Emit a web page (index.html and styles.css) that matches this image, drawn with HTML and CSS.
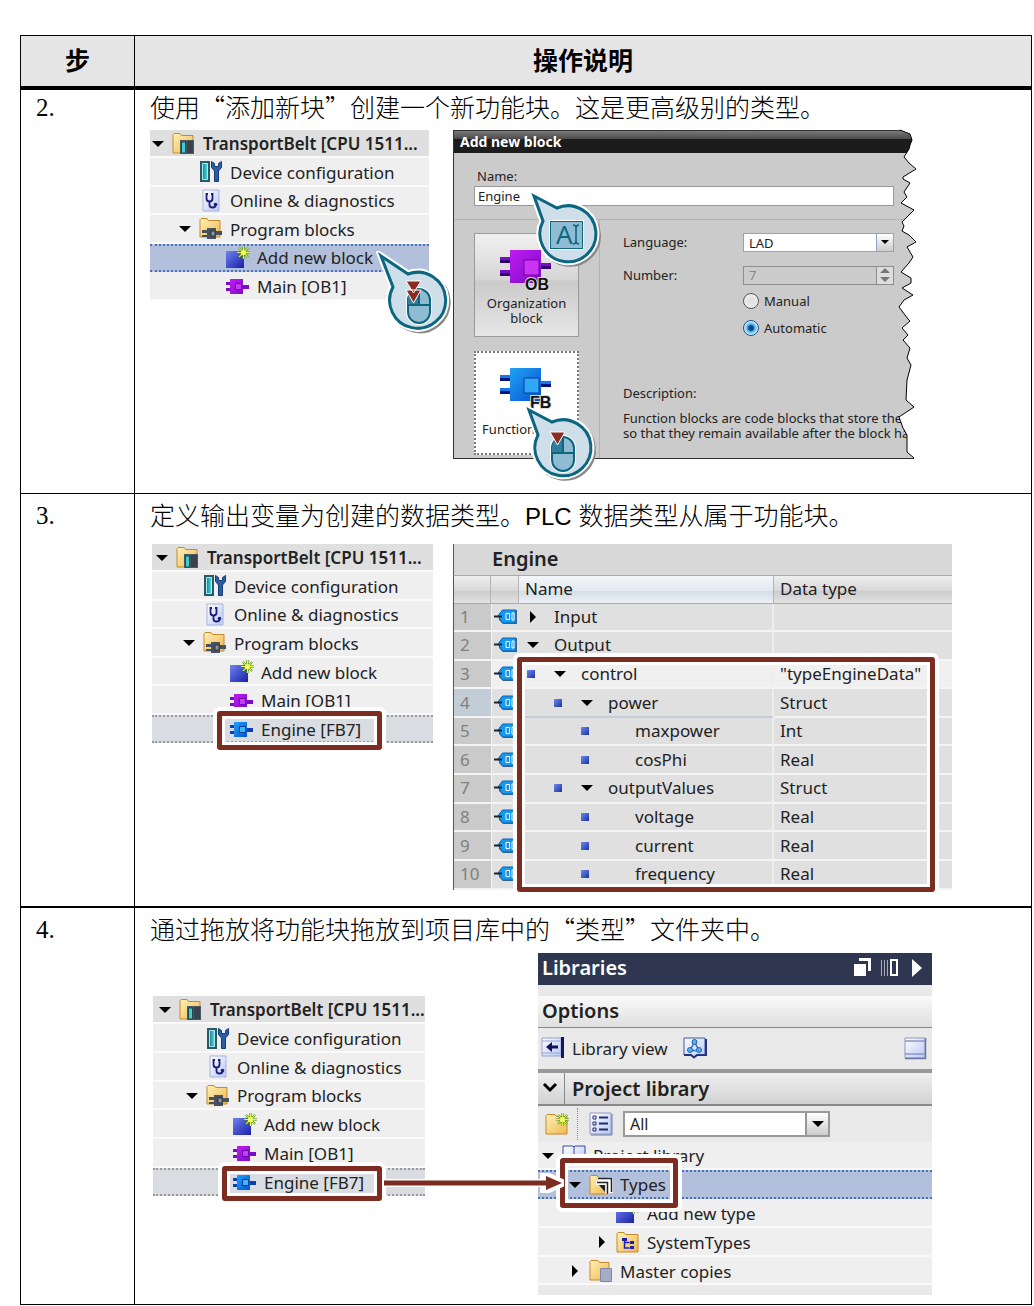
FILE: index.html
```html
<!DOCTYPE html>
<html lang="zh-CN">
<head>
<meta charset="utf-8">
<meta name="viewport" content="width=device-width, initial-scale=1">
<title>操作说明</title>
<link rel="stylesheet" href="styles.css">
</head>
<body>
<svg class="sprite" aria-hidden="true">
  <defs>
    <linearGradient id="g-folder" x1="0" y1="0" x2="1" y2="1"><stop offset="0" stop-color="#fff0b8"/><stop offset="1" stop-color="#efb94f"/></linearGradient>
    <linearGradient id="g-blue" x1="0" y1="0" x2="1" y2="1"><stop offset="0" stop-color="#6f83ee"/><stop offset="1" stop-color="#1a1fa8"/></linearGradient>
    <linearGradient id="g-fb" x1="0" y1="0" x2="1" y2="1"><stop offset="0" stop-color="#1ea4f5"/><stop offset="1" stop-color="#0a4fd0"/></linearGradient>
    <linearGradient id="g-ob" x1="0" y1="0" x2="1" y2="1"><stop offset="0" stop-color="#c21cf2"/><stop offset="1" stop-color="#7a0cc8"/></linearGradient>
    <linearGradient id="g-page" x1="0" y1="0" x2="1" y2="1"><stop offset="0" stop-color="#ffffff"/><stop offset="1" stop-color="#b9c8f4"/></linearGradient>
    <linearGradient id="g-rack" x1="0" y1="0" x2="1" y2="0"><stop offset="0" stop-color="#1d7f8c"/><stop offset="1" stop-color="#4fe0e2"/></linearGradient>
  </defs>
  <symbol id="i-down" viewBox="0 0 12 12"><path d="M0 3h12L6 9z" fill="#000"/></symbol>
  <symbol id="i-right" viewBox="0 0 12 12"><path d="M3 0l6 6-6 6z" fill="#000"/></symbol>
  <symbol id="i-station" viewBox="0 0 24 24">
    <path d="M1 21V2.500L2 1.500h6l1.500 2H21V21z" fill="url(#g-folder)" stroke="#c58a2a"/>
    <path d="M8 22V8h14v14z" fill="#4d5866"/><path d="M9.500 10h4v11h-4z" fill="#3fd0d0" stroke="#1e4450"/><path d="M15 9h6v12h-6z" fill="#38414d"/>
  </symbol>
  <symbol id="i-device" viewBox="0 0 24 24">
    <path d="M1 1h10v21H1z" fill="#2c5968"/><path d="M3.500 3.500h5v16h-5z" fill="url(#g-rack)" stroke="#a6ecee"/>
    <path d="M12.500 1.500v6l3 3.500v10.500h4V11l3-3.500v-6l-3 2v3h-4v-3z" fill="#2a5da8" stroke="#173a72"/>
  </symbol>
  <symbol id="i-diag" viewBox="0 0 24 24">
    <path d="M4 1h16v21H4z" fill="url(#g-page)" stroke="#a9b4dc"/>
    <path d="M9 5H7.500v4.500q0 3 3 3t3-3V5H12M10.500 12.500V16q0 2.500 3 2.500t3-2" fill="none" stroke="#1b1b7a" stroke-width="1.800"/><circle cx="16.500" cy="15.500" r="1.800" fill="#1b1b7a"/>
  </symbol>
  <symbol id="i-program" viewBox="0 0 24 24">
    <path d="M1 20V2.500L2 1.500h6l1.500 2H21V20z" fill="url(#g-folder)" stroke="#c58a2a"/>
    <path d="M3 13h5v-2h9v3h6v4h-6v4H8v-2H3v-2h5v-2H3z" fill="#48525e"/><path d="M12 14h4v5h-4z" fill="#8d98a5" stroke="#2c333c"/>
  </symbol>
  <symbol id="i-spark" viewBox="0 0 12 12">
    <path d="M6 0v12M0 6h12M1.800 1.800l8.400 8.400M10.200 1.800l-8.400 8.400" stroke="#4c8a1d" stroke-width="2"/>
    <path d="M6 0v12M0 6h12M2 2l8 8M10 2l-8 8" stroke="#e4f53a" stroke-width="1"/><circle cx="6" cy="6" r="2.400" fill="#f4ff66"/>
  </symbol>
  <symbol id="i-new" viewBox="0 0 24 24"><path d="M0 5h18v17H0z" fill="url(#g-blue)"/><use href="#i-spark" x="11" y="0" width="13" height="13"/></symbol>
  <symbol id="i-ob" viewBox="0 0 24 24"><path d="M0 8h5v3H0zM0 14h5v3H0zM17 11h6v4h-6z" fill="#7a0cc8"/><path d="M4 5h13v15H4z" fill="url(#g-ob)"/><path d="M9.500 9.500h6v6h-6z" fill="#c53cf4" stroke="#6a08a8"/></symbol>
  <symbol id="i-fb" viewBox="0 0 24 24"><path d="M0 8h5v3H0zM0 14h5v3H0zM17 11h6v4h-6z" fill="#0b3fb4"/><path d="M4 5h13v15H4z" fill="url(#g-fb)"/><path d="M9.500 9.500h6v6h-6z" fill="#3db5ff" stroke="#083c9c"/></symbol>
  <symbol id="i-tag" viewBox="0 0 24 16">
    <path d="M5 5l4-4h14v14H9l-4-4z" fill="#5b6470"/><path d="M4 7l4.500-6H22v13H8.500z" fill="#149af0" stroke="#0b62b4"/>
    <path d="M12 4.500h3.500v6H12zM18 4h2v7h-2z" fill="#1888e0" stroke="#fff"/><path d="M0 7.500h8" stroke="#1b2633" stroke-width="2"/>
  </symbol>
  <symbol id="i-book" viewBox="0 0 24 24"><path d="M1 2h10l1 1 1-1h10v19H13l-1 1-1-1H1z" fill="url(#g-page)" stroke="#3b44a4"/><path d="M12 3v18" stroke="#3b44a4"/></symbol>
  <symbol id="i-types" viewBox="0 0 24 24"><path d="M1 21V3.500L2 2.500h6l1.500 2H18V21z" fill="url(#g-folder)" stroke="#c58a2a"/><path d="M9 6.500h13.500V20M7 10h11.500v11" fill="none" stroke="#fff" stroke-width="4"/><path d="M9 5.500h13.500V19M8 9.500h10.500V21" fill="none" stroke="#222" stroke-width="1.500"/><path d="M10 12h6v7z" fill="#222"/></symbol>
  <symbol id="i-systypes" viewBox="0 0 24 24"><path d="M1 22V3.500L2 2.500h6l1.500 2H22V22z" fill="url(#g-folder)" stroke="#c58a2a"/><path d="M6 8h5v3H6zM14 11h4v3h-4zM14 16h4v3h-4z" fill="#1a1fb8"/><path d="M8.500 10v8h5M8.500 12.500h5" fill="none" stroke="#1a1fb8" stroke-width="1.500"/></symbol>
  <symbol id="i-master" viewBox="0 0 24 24"><path d="M1 21V2.500L2 1.500h7l1.500 2H20V21z" fill="url(#g-folder)" stroke="#c58a2a"/><path d="M11.500 9.500h11v13h-11z" fill="#a5adc4" stroke="#8088a8"/></symbol>
  <symbol id="i-viewback" viewBox="0 0 24 24"><path d="M1 2h19v18H1z" fill="url(#g-page)" stroke="#97a3d4"/><path d="M20 1h3v21h-3z" fill="#14145c"/><path d="M1 5h18M1 17h18" stroke="#97a3d4"/><path d="M5 11l6-5v3.500h6v3h-6V16z" fill="#14145c"/></symbol>
  <symbol id="i-bookview" viewBox="0 0 24 24"><path d="M1 2h21v17h-8l-3 2-3-2H1z" fill="url(#g-page)" stroke="#3b58a8"/><path d="M1 19h7l3 2.500 3-2.500h9V3" fill="none" stroke="#25327c" stroke-width="2"/><path d="M11.500 6L7 14.500h9z" fill="none" stroke="#2c74c0" stroke-width="1.500"/><circle cx="11.500" cy="6" r="2.500" fill="#5dacf0" stroke="#2064b4"/><circle cx="7" cy="14" r="2.500" fill="#5dacf0" stroke="#2064b4"/><circle cx="16" cy="14" r="2.500" fill="#5dacf0" stroke="#2064b4"/></symbol>
  <symbol id="i-window" viewBox="0 0 24 24"><path d="M2 2h20v20H2z" fill="url(#g-page)" stroke="#8c96c8"/><path d="M2 5h20M2 18h20" stroke="#8c96c8" stroke-width="1.500"/><path d="M22.500 2v20.500H2" fill="none" stroke="#6d76a4" stroke-width="1.500"/></symbol>
  <symbol id="i-newfolder" viewBox="0 0 24 24"><path d="M1 22V3.500L2 2.500h8l1.500 2H22V22z" fill="url(#g-folder)" stroke="#c58a2a"/><use href="#i-spark" x="11" y="1" width="13" height="13"/></symbol>
  <symbol id="i-list" viewBox="0 0 24 24"><path d="M1 1h21v21H1z" fill="url(#g-page)" stroke="#8c96c8"/><path d="M23 2v21H2" fill="none" stroke="#6d76a4"/><path d="M4 4h3v3H4zM4 10h3v3H4zM4 16h3v3H4z" fill="none" stroke="#222a6a"/><path d="M10 5.500h9M10 11.500h9M10 17.500h9" stroke="#222a6a" stroke-width="2"/></symbol>
  <symbol id="i-mouse" viewBox="-12 -16 26 40">
    <rect x="-10" y="-12" width="22" height="34" rx="11" fill="#8fbcd2" stroke="#fff" stroke-width="4"/>
    <rect x="-10" y="-12" width="22" height="34" rx="11" fill="#8fbcd2" stroke="#0c6680" stroke-width="2"/>
    <path d="M-10 3V-1Q-10 -12 1 -12V3z" fill="#2f7f9b"/><path d="M-10 4h22M1 -12V4" stroke="#0c6680" stroke-width="2"/>
  </symbol>
</svg>

<table class="steps">
  <colgroup><col class="col-step"><col></colgroup>
  <thead>
    <tr><th scope="col">步</th><th scope="col">操作说明</th></tr>
  </thead>
  <tbody>
    <tr class="step step-two">
      <td class="step-no">2.</td>
      <td>
        <p>使用“添加新块”创建一个新功能块。这是更高级别的类型。</p>
        <div class="figure">
          <div class="tree-wrap">
            <ul class="tree">
              <li class="root"><svg class="arrow"><use href="#i-down"/></svg><svg class="icon"><use href="#i-station"/></svg>TransportBelt [CPU 1511...</li>
              <li class="lv1"><svg class="icon"><use href="#i-device"/></svg>Device configuration</li>
              <li class="lv1"><svg class="icon"><use href="#i-diag"/></svg>Online &amp; diagnostics</li>
              <li class="lv1"><svg class="arrow"><use href="#i-down"/></svg><svg class="icon"><use href="#i-program"/></svg>Program blocks</li>
              <li class="lv2 selected"><svg class="icon"><use href="#i-new"/></svg>Add new block</li>
              <li class="lv2"><svg class="icon"><use href="#i-ob"/></svg>Main [OB1]</li>
            </ul>
            <svg class="callout callout-click" viewBox="-42 -50 80 88" width="80" height="88" aria-hidden="true">
              <path class="c-shadow" d="M-37 -45L-10 -27A28 28 0 1 1 -25 -14Z"/>
              <path class="c-halo" d="M-37 -45L-10 -27A28 28 0 1 1 -25 -14Z"/>
              <path class="c-body" d="M-37 -45L-10 -27A28 28 0 1 1 -25 -14Z"/>
              <use href="#i-mouse" x="-12" y="-16" width="26" height="40"/>
              <path class="c-tri" d="M-12 -11H3L-4.500 2zM-12 -20H3L-4.500 -8z"/>
            </svg>
          </div>
          <div class="dialog-wrap">
            <form class="dialog">
              <div class="dialog-title">Add new block</div>
              <div class="dialog-name">
                <label for="block-name">Name:</label>
                <input id="block-name" type="text" value="Engine">
              </div>
              <div class="dialog-main">
                <div class="kinds">
                  <button type="button" class="kind">
                    <svg class="kind-icon" viewBox="0 0 54 44"><path d="M0 7h10v6H0zM0 20h10v6H0zM41 13h10v6H41z" fill="#7a0cc8"/><path d="M0 10h10v3H0zM0 23h10v3H0zM41 16h10v3H41z" fill="#2c0070"/><path d="M10 0h31v33H10z" fill="url(#g-ob)"/><path d="M24 10h15v15H24z" fill="#cc33f5" stroke="#6a08a8"/><text x="25" y="40">OB</text></svg>
                    <span>Organization<br>block</span>
                  </button>
                  <button type="button" class="kind active">
                    <svg class="kind-icon" viewBox="0 0 54 44"><path d="M0 7h10v6H0zM0 20h10v6H0zM41 13h10v6H41z" fill="#1479e8"/><path d="M0 10h10v3H0zM0 23h10v3H0zM41 16h10v3H41z" fill="#04127c"/><path d="M10 0h31v33H10z" fill="url(#g-fb)"/><path d="M24 10h15v15H24z" fill="#30a8fa" stroke="#083c9c"/><text x="30" y="40">FB</text></svg>
                    <span>Function block</span>
                  </button>
                </div>
                <div class="settings">
                  <label for="language">Language:</label>
                  <span class="combo"><select id="language"><option>LAD</option></select><span class="combo-btn"><svg><use href="#i-down"/></svg></span></span>
                  <label for="number">Number:</label>
                  <span class="spin"><input id="number" type="text" inputmode="numeric" value="7" disabled><span class="spin-btn"><svg viewBox="0 0 10 14"><path d="M0 5h10L5 0zM0 9h10l-5 5z" fill="#777"/></svg></span></span>
                  <label class="radio manual"><input type="radio" name="numbering">Manual</label>
                  <label class="radio"><input type="radio" name="numbering" checked>Automatic</label>
                  <div class="description">Description:</div>
                  <div class="description-text">Function blocks are code blocks that store the<br>so that they remain available after the block ha</div>
                </div>
              </div>
            </form>
            <svg class="tear" viewBox="895 128 25 333" width="25" height="333" aria-hidden="true">
              <path fill="#fff" d="M900 128H920V461H914V458L907 452V435L903 428L899 417L914 407L906 400L907 380L911 365L907 358L910 348L903 340L908 335L902 328L910 321L908 319L899 307L904 300L913 295L902 288L911 283V278L901 272L909 263L913 257L907 247L916 242L909 235L902 231L904 226L902 222L914 210L901 203L907 197L904 192L910 183L903 179V177L916 169L909 163L904 157L909 149L910 145L912 140L910 134L900 130Z"/>
              <path fill="none" stroke="#000" d="M914 458L907 452V435L903 428L899 417L914 407L906 400L907 380L911 365L907 358L910 348L903 340L908 335L902 328L910 321L908 319L899 307L904 300L913 295L902 288L911 283V278L901 272L909 263L913 257L907 247L916 242L909 235L902 231L904 226L902 222L914 210L901 203L907 197L904 192L910 183L903 179V177L916 169L909 163L904 157L909 149L910 145L912 140L910 134L900 130"/>
            </svg>
            <svg class="callout callout-type" viewBox="-38 -44 76 82" width="76" height="82" aria-hidden="true">
              <path class="c-shadow" d="M-33 -39L-10 -27A28 28 0 1 1 -24 -14Z"/>
              <path class="c-halo" d="M-33 -39L-10 -27A28 28 0 1 1 -24 -14Z"/>
              <path class="c-body" d="M-33 -39L-10 -27A28 28 0 1 1 -24 -14Z"/>
              <rect x="-18" y="-15" width="35" height="30" fill="#fff"/><rect x="-16.500" y="-13.500" width="32" height="27" fill="#8fbcd2" stroke="#0c6680"/>
              <text x="-11" y="9">A</text>
              <path d="M6 -10q3 0 3 3V6q0 3-3 3M12 -10q-3 0-3 3V6q0 3 3 3" fill="none" stroke="#0c6680" stroke-width="1.500"/>
            </svg>
            <svg class="callout callout-pick" viewBox="-38 -44 76 82" width="76" height="82" aria-hidden="true">
              <path class="c-shadow" d="M-33 -39L-10 -27A28 28 0 1 1 -24 -14Z"/>
              <path class="c-halo" d="M-33 -39L-10 -27A28 28 0 1 1 -24 -14Z"/>
              <path class="c-body" d="M-33 -39L-10 -27A28 28 0 1 1 -24 -14Z"/>
              <use href="#i-mouse" x="-12" y="-16" width="26" height="40"/>
              <path class="c-tri" d="M-12 -17H3L-4.500 -4z"/>
            </svg>
          </div>
        </div>
      </td>
    </tr>
    <tr class="step step-three">
      <td class="step-no">3.</td>
      <td>
        <p>定义输出变量为创建的数据类型。<span class="latin">PLC </span>数据类型从属于功能块。</p>
        <div class="figure">
          <div class="tree-wrap">
            <ul class="tree">
              <li class="root"><svg class="arrow"><use href="#i-down"/></svg><svg class="icon"><use href="#i-station"/></svg>TransportBelt [CPU 1511...</li>
              <li class="lv1"><svg class="icon"><use href="#i-device"/></svg>Device configuration</li>
              <li class="lv1"><svg class="icon"><use href="#i-diag"/></svg>Online &amp; diagnostics</li>
              <li class="lv1"><svg class="arrow"><use href="#i-down"/></svg><svg class="icon"><use href="#i-program"/></svg>Program blocks</li>
              <li class="lv2"><svg class="icon"><use href="#i-new"/></svg>Add new block</li>
              <li class="lv2"><svg class="icon"><use href="#i-ob"/></svg>Main [OB1]</li>
              <li class="lv2 marked"><svg class="icon"><use href="#i-fb"/></svg>Engine [FB7]</li>
            </ul>
            <div class="frame frame-engine"></div>
          </div>
          <div class="vars-wrap">
            <table class="vars">
              <caption>Engine</caption>
              <thead><tr><th></th><th></th><th class="name-head" scope="col">Name</th><th scope="col">Data type</th></tr></thead>
              <tbody>
                <tr><td>1</td><td><svg class="tag"><use href="#i-tag"/></svg></td><td><span class="cell"><svg class="arrow"><use href="#i-right"/></svg>Input</span></td><td></td></tr>
                <tr><td>2</td><td><svg class="tag"><use href="#i-tag"/></svg></td><td><span class="cell"><svg class="arrow"><use href="#i-down"/></svg>Output</span></td><td></td></tr>
                <tr class="light"><td>3</td><td><svg class="tag"><use href="#i-tag"/></svg></td><td><span class="cell in1"><i class="dot"></i><svg class="arrow"><use href="#i-down"/></svg>control</span></td><td>"typeEngineData"</td></tr>
                <tr class="current"><td>4</td><td><svg class="tag"><use href="#i-tag"/></svg></td><td><span class="cell in2"><i class="dot"></i><svg class="arrow"><use href="#i-down"/></svg>power</span></td><td>Struct</td></tr>
                <tr><td>5</td><td><svg class="tag"><use href="#i-tag"/></svg></td><td><span class="cell in3"><i class="dot"></i>maxpower</span></td><td>Int</td></tr>
                <tr><td>6</td><td><svg class="tag"><use href="#i-tag"/></svg></td><td><span class="cell in3"><i class="dot"></i>cosPhi</span></td><td>Real</td></tr>
                <tr><td>7</td><td><svg class="tag"><use href="#i-tag"/></svg></td><td><span class="cell in2"><i class="dot"></i><svg class="arrow"><use href="#i-down"/></svg>outputValues</span></td><td>Struct</td></tr>
                <tr><td>8</td><td><svg class="tag"><use href="#i-tag"/></svg></td><td><span class="cell in3"><i class="dot"></i>voltage</span></td><td>Real</td></tr>
                <tr><td>9</td><td><svg class="tag"><use href="#i-tag"/></svg></td><td><span class="cell in3"><i class="dot"></i>current</span></td><td>Real</td></tr>
                <tr><td>10</td><td><svg class="tag"><use href="#i-tag"/></svg></td><td><span class="cell in3"><i class="dot"></i>frequency</span></td><td>Real</td></tr>
              </tbody>
            </table>
            <div class="frame frame-vars"></div>
          </div>
        </div>
      </td>
    </tr>
    <tr class="step step-four">
      <td class="step-no">4.</td>
      <td>
        <p>通过拖放将功能块拖放到项目库中的“类型”文件夹中。</p>
        <div class="figure">
          <div class="tree-wrap">
            <ul class="tree">
              <li class="root"><svg class="arrow"><use href="#i-down"/></svg><svg class="icon"><use href="#i-station"/></svg>TransportBelt [CPU 1511...</li>
              <li class="lv1"><svg class="icon"><use href="#i-device"/></svg>Device configuration</li>
              <li class="lv1"><svg class="icon"><use href="#i-diag"/></svg>Online &amp; diagnostics</li>
              <li class="lv1"><svg class="arrow"><use href="#i-down"/></svg><svg class="icon"><use href="#i-program"/></svg>Program blocks</li>
              <li class="lv2"><svg class="icon"><use href="#i-new"/></svg>Add new block</li>
              <li class="lv2"><svg class="icon"><use href="#i-ob"/></svg>Main [OB1]</li>
              <li class="lv2 marked"><svg class="icon"><use href="#i-fb"/></svg>Engine [FB7]</li>
            </ul>
            <div class="frame frame-engine"></div>
          </div>
          <div class="library">
            <div class="lib-title"><span>Libraries</span>
              <svg viewBox="0 0 70 20" width="70" height="20"><path d="M1 6h12v12H1z" fill="#fff"/><path d="M6 1.500h10.500V13" fill="none" stroke="#fff" stroke-width="3"/><path d="M28.500 2v16M31.500 2v16M34.500 2v16" stroke="#aab" /><path d="M38 2h6v15h-6z" fill="none" stroke="#fff" stroke-width="2"/><path d="M59 1l10 9-10 9z" fill="#fff"/></svg>
            </div>
            <div class="lib-options">Options</div>
            <div class="lib-tools"><svg class="icon"><use href="#i-viewback"/></svg><span>Library view</span><svg class="icon"><use href="#i-bookview"/></svg><svg class="icon last"><use href="#i-window"/></svg></div>
            <div class="lib-head"><span class="chev"><svg viewBox="0 0 16 12" width="16" height="12"><path d="M2 2l6 6 6-6" fill="none" stroke="#000" stroke-width="3"/></svg></span>Project library</div>
            <div class="lib-filter"><svg class="icon"><use href="#i-newfolder"/></svg><span class="sep"></span><svg class="icon"><use href="#i-list"/></svg><span class="combo"><select aria-label="Filter"><option>All</option></select><span class="combo-btn"><svg><use href="#i-down"/></svg></span></span></div>
            <div class="tree-wrap">
              <ul class="tree">
                <li><svg class="arrow"><use href="#i-down"/></svg><svg class="icon"><use href="#i-book"/></svg>Project library</li>
                <li class="lv1 selected"><svg class="arrow"><use href="#i-down"/></svg><svg class="icon"><use href="#i-types"/></svg>Types</li>
                <li class="lv2"><svg class="icon"><use href="#i-new"/></svg>Add new type</li>
                <li class="lv2"><svg class="arrow"><use href="#i-right"/></svg><svg class="icon"><use href="#i-systypes"/></svg>SystemTypes</li>
                <li class="lv1"><svg class="arrow"><use href="#i-right"/></svg><svg class="icon"><use href="#i-master"/></svg>Master copies</li>
              </ul>
              <div class="frame frame-types"></div>
              <svg class="drag" viewBox="0 0 180 20" width="180" height="20" aria-hidden="true"><path d="M0 10h160M160 2l18 8-18 8z" stroke="#fff" stroke-width="8" fill="#fff"/><path d="M0 10h164" stroke="#7d2c22" stroke-width="5"/><path d="M162 3l16 7-16 7z" fill="#7d2c22"/></svg>
            </div>
          </div>
        </div>
      </td>
    </tr>
  </tbody>
</table>
</body>
</html>
```

FILE: styles.css
```css
* { box-sizing: border-box; }

body {
  margin: 35px 2px 1px 20px;
  background: #fff;
  color: #000;
  font-family: "Noto Sans", "Noto Sans CJK SC", sans-serif;
}

.sprite { position: absolute; width: 0; height: 0; }
svg { display: block; flex: none; }
ul { list-style: none; margin: 0; padding: 0; }

/* Outer instruction table */
.steps { width: 100%; border-collapse: collapse; table-layout: fixed; }
.col-step { width: 114px; }
.steps > thead th {
  height: 52px;
  padding: 0 0 3px;
  border: 1px solid #000;
  border-bottom: 4px solid #000;
  background: #e5e5e5;
  font: 700 25px/36px "Noto Sans CJK SC", sans-serif;
}
.step > td { border: 1px solid #000; padding: 4px 15px 0; vertical-align: top; }
.step > .step-no { font: 25px/36px "Liberation Serif", serif; }
.step p { margin: 0; font: 300 25px/32px "Noto Sans CJK SC", sans-serif; }
.step p .latin { font: 24px/24px "Liberation Sans", sans-serif; }
.step-two > td { padding-top: 0; padding-bottom: 34px; }
.step-three > td { padding-bottom: 16px; }
.step-four > td { padding-bottom: 9px; }
.step-four > td { border-top-width: 2px; }

.figure { display: flex; align-items: flex-start; }
.step-two .figure { margin-top: 8px; gap: 24px; }
.step-three .figure { margin: 14px 0 0 2px; gap: 20px; }
.step-four .figure { margin: 9px 0 0 3px; gap: 114px; }

/* Project tree */
.tree-wrap { position: relative; }
.tree {
  display: grid;
  grid-auto-rows: 1fr;
  width: 279px;
  height: 171px;
  font-size: 17px;
  color: #222;
  --inset: 2px;
}
.tree li {
  display: flex;
  align-items: center;
  padding-top: 2px;
  padding-left: calc(var(--inset) + 20px);
  border-bottom: 2px solid #fafafa;
  background: #efefef;
  line-height: 23px;
  white-space: nowrap;
}
.tree li.lv1 { padding-left: calc(var(--inset) + 47px); }
.tree li.lv2 { padding-left: calc(var(--inset) + 74px); }
.tree li.root { background: #dfdfdf; font-weight: 600; }
.arrow { width: 12px; height: 12px; margin: 0 8px 0 -20px; }
.icon { width: 24px; height: 24px; margin-right: 7px; }
.tree li.selected { padding-top: 0; background: #b3c0dc; border-block: 2px dotted #4a70bd; }
.tree li.marked { padding-top: 0; background: #d9dde2; border-block: 2px dotted #999; }
.step-three .tree { width: 281px; height: 200px; --inset: 4px; }
.step-four .tree { width: 271px; height: 201px; --inset: 6px; }
.step-four .figure > .tree-wrap { margin-top: 43px; }

.frame {
  position: absolute;
  border: 5px solid #7d2c22;
  border-radius: 3px;
  box-shadow: 0 0 0 4px #fff, inset 0 0 0 3px #fff;
}
.frame-engine { left: 65px; bottom: -6px; width: 165px; height: 39px; }
.step-four .frame-engine { left: 69px; bottom: -4px; width: 160px; height: 35px; }

/* Callouts */
.callout { position: absolute; }
.callout text { font: 26px "Noto Sans", sans-serif; fill: #0c6680; }
.callout-click { left: 226px; top: 121px; }
.callout-type { left: 76px; top: 61px; }
.callout-pick { left: 71px; top: 275px; }
.c-shadow { fill: #888; stroke: #888; stroke-width: 6px; transform: translate(2px, 2px); }
.c-halo { fill: #fff; stroke: #fff; stroke-width: 7px; }
.c-body { fill: #cfdfea; stroke: #0c6680; stroke-width: 3px; }
.c-tri { fill: #8b2c20; stroke: #fff; stroke-width: 1px; }

/* Add new block dialog */
.dialog-wrap { position: relative; width: 461px; }
.dialog {
  overflow: hidden;
  border: 1px solid #333;
  border-right: 0;
  background: #cbcbcb;
  font-size: 13px;
  color: #222;
}
.dialog input, .dialog select, .dialog button { font-family: inherit; font-size: inherit; color: inherit; }
.dialog-title {
  height: 22px;
  padding-left: 6px;
  background: linear-gradient(#7a7a7a, #4a4a4a 8px, #1c1c1c 8px);
  color: #fff;
  font-size: 14px;
  font-weight: 700;
  line-height: 21px;
}
.dialog-name { padding: 14px 20px 13px; border-bottom: 1px solid #b4b4b4; }
.dialog-name label { display: block; padding-left: 3px; line-height: 18px; margin-bottom: 1px; }
.dialog-name input {
  display: block;
  width: 100%;
  height: 20px;
  padding: 0 3px;
  border: 1px solid #999;
  background: #fff;
}
.dialog-main { display: flex; }
.kinds {
  display: flex;
  flex: none;
  flex-direction: column;
  gap: 14px;
  width: 146px;
  padding: 13px 20px 3px;
  border-right: 1px solid #b4b4b4;
}
.kind {
  display: flex;
  flex-direction: column;
  align-items: center;
  height: 104px;
  padding: 16px 0 0;
  border: 1px solid #999;
  background: linear-gradient(#f0f0f0, #d6d6d6 45%, #cacaca 46%, #e6e6e6);
  line-height: 15px;
  white-space: nowrap;
}
.kind.active { border: 2px dotted #777; background: #fff; padding-top: 15px; }
.kind-icon { width: 54px; height: 44px; margin-bottom: 2px; }
.kind.active .kind-icon { margin-bottom: 10px; }
.kind-icon text { font: 700 16px "Liberation Sans", sans-serif; fill: #111; stroke: #ddd; stroke-width: 2px; paint-order: stroke; }
.settings {
  display: grid;
  grid-template-columns: 120px 151px;
  grid-auto-rows: min-content;
  align-items: center;
  padding: 13px 0 0 23px;
  line-height: 19px;
}
.combo, .spin { position: relative; display: flex; height: 19px; }
.combo select, .spin input {
  appearance: none;
  width: 100%;
  height: 100%;
  margin: 0;
  padding: 0 5px;
  border: 1px solid #94a2bf;
  border-radius: 0;
  background: #fff;
}
.combo-btn, .spin-btn {
  position: absolute;
  inset: 0 0 0 auto;
  display: flex;
  align-items: center;
  justify-content: center;
  width: 18px;
  border: 1px solid #94a2bf;
  background: linear-gradient(#fff, #ccc);
  pointer-events: none;
}
.combo-btn svg { width: 8px; height: 8px; }
.spin, .settings > label[for="number"] { margin-top: 14px; }
.dialog .spin input { border-color: #8d8d8d; background: #cbcbcb; color: #888; }
.spin-btn { border-color: #8d8d8d; background: #ddd; }
.spin-btn svg { width: 10px; height: 14px; }
.radio { grid-column: 2; display: flex; align-items: center; gap: 5px; margin-top: 8px; }
.radio.manual { margin-top: 7px; }
.radio input {
  appearance: none;
  width: 16px;
  height: 16px;
  margin: 0;
  border: 1px solid #555;
  border-radius: 50%;
  background: radial-gradient(#ddd, #f4f4f4);
}
.radio input:checked {
  border-color: #1b4f86;
  background: radial-gradient(circle, #0c3f80 2px, #53baf0 4px, #d9f2ff 7px);
}
.description, .description-text { grid-column: 1 / -1; white-space: nowrap; }
.description { margin-top: 46px; }
.description-text { margin-top: 8px; line-height: 15px; }
.tear { position: absolute; right: -6px; top: -2px; }

/* Block interface table */
.vars-wrap { position: relative; width: 499px; }
.vars {
  width: 100%;
  height: 314px;
  border-collapse: separate;
  border-spacing: 0;
  table-layout: fixed;
  border-left: 1px solid #555;
  font-size: 17px;
  color: #222;
}
.vars caption {
  height: 32px;
  padding-left: 38px;
  border-bottom: 1px solid #aaa;
  border-left: 1px solid #555;
  background: #d8d8d8;
  font-size: 20px;
  font-weight: 600;
  line-height: 30px;
  text-align: left;
}
.vars th, .vars td { padding: 0 0 0 6px; text-align: left; font-weight: 400; line-height: 24px; white-space: nowrap; }
.vars th {
  height: 28px;
  border-right: 1px solid #b4b4b4;
  border-bottom: 1px solid #aaa;
  background: linear-gradient(#eee, #d8d8d8 55%, #ccc 56%, #e2e2e2);
}
.vars .name-head { background: linear-gradient(#f4f7fa, #e2e9f0 55%, #d3dde7 56%, #edf1f5); }
.vars th:nth-child(1) { width: 37px; }
.vars th:nth-child(2) { width: 28px; }
.vars th:nth-child(3) { width: 255px; }
.vars th:last-child { border-right: 0; }
.vars td { background: #e0e0e0; border-bottom: 2px solid #f4f4f4; }
.vars td:nth-child(1) { background: #cacaca; color: #808080; }
.vars td:nth-child(2) { padding-left: 2px; border-left: 1px solid #f4f4f4; }
.vars td:nth-child(3) { padding-left: 8px; border-right: 2px solid #eee; }
.vars .light td:nth-child(n+2) { background: #f0f0f0; }
.vars .current td:nth-child(1) { background: #c3cdd8; }
.vars .current td:nth-child(3) { border-bottom-color: #c4ccd8; }
.tag { width: 24px; height: 16px; }
.cell { display: flex; align-items: center; }
.cell .arrow { margin: 0 15px 0 0; }
.cell .dot { width: 8px; height: 8px; margin-right: 19px; background: linear-gradient(135deg, #6f8af0, #1b32a0); }
.cell.in2 { padding-left: 27px; }
.cell.in3 { padding-left: 54px; }
.cell.in3 .dot { margin-right: 46px; }
.frame-vars { left: 64px; top: 113px; width: 418px; height: 235px; }

/* Library panel */
.library { width: 394px; height: 342px; background: #e9e9e9; color: #222; }
.lib-title {
  display: flex;
  align-items: center;
  justify-content: space-between;
  height: 32px;
  margin-bottom: 11px;
  padding: 0 9px 2px 4px;
  background: #2e3650;
  color: #fff;
  font-size: 20px;
  font-weight: 600;
}
.lib-options {
  height: 32px;
  padding-left: 4px;
  border-bottom: 1px solid #888;
  background: linear-gradient(#fafafa, #dfdfdf);
  font-size: 20px;
  font-weight: 600;
  line-height: 29px;
}
.lib-tools { display: flex; align-items: center; height: 41px; padding: 0 5px 0 3px; font-size: 17px; }
.lib-tools span { margin-right: 15px; }
.lib-tools .last { margin: 0 0 0 auto; }
.lib-head {
  display: flex;
  align-items: center;
  height: 37px;
  border-top: 4px solid #999;
  border-bottom: 2px solid #888;
  background: linear-gradient(#efefef, #d2d2d2);
  font-size: 20px;
  font-weight: 600;
}
.chev { display: flex; align-items: center; width: 27px; height: 100%; margin-right: 7px; padding-left: 4px; border-right: 1px solid #888; }
.lib-filter { display: flex; align-items: center; height: 36px; padding-left: 7px; font-size: 16px; }
.lib-filter .sep { height: 32px; margin: 0 11px 0 1px; border-left: 1px dotted #888; }
.lib-filter .combo { width: 207px; height: 26px; margin-left: 3px; }
.lib-filter select { border: 2px solid #999; font: inherit; color: inherit; }
.lib-filter .combo-btn { width: 25px; border: 2px solid #999; }
.lib-filter .combo-btn svg { width: 12px; height: 12px; }
.library .tree { width: 100%; height: 144px; --inset: 4px; }
.frame-types { left: 22px; top: 16px; width: 118px; height: 50px; }
.drag { position: absolute; left: -154px; top: 31px; }
```
